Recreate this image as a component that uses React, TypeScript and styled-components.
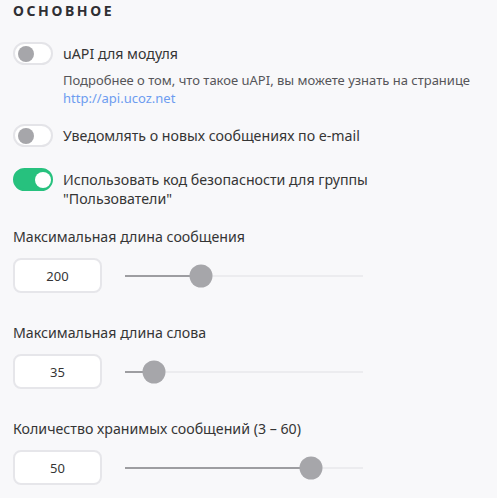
import React from 'react';
import styled, { createGlobalStyle } from 'styled-components';

const GlobalStyle = createGlobalStyle`
  html, body {
    margin: 0;
    padding: 0;
    background: #f8f8fa;
  }
  body {
    font-family: 'Noto Sans', 'Open Sans', sans-serif;
    color: #353535;
  }
`;

const Page = styled.div`
  width: 497px;
  height: 498px;
  box-sizing: border-box;
  padding: 1px 13px 0;
  background: #f8f8fa;
  overflow: hidden;
`;

const Title = styled.h2`
  margin: 0;
  font-size: 14px;
  font-weight: 700;
  letter-spacing: 2.6px;
  line-height: 20px;
  color: #2f2f33;
`;

const OptionList = styled.div`
  display: flex;
  flex-direction: column;
  margin-top: 21px;
  gap: 21px;
`;

const OptionRow = styled.div`
  display: flex;
  align-items: flex-start;
  gap: 10px;
`;

const Toggle = styled.div<{ $on?: boolean }>`
  flex: none;
  position: relative;
  width: 40px;
  height: 23px;
  box-sizing: border-box;
  border-radius: 12px;
  border: 2px solid ${(p) => (p.$on ? '#27c17e' : '#e4e4e8')};
  background: ${(p) => (p.$on ? '#27c17e' : '#ffffff')};

  &::after {
    content: '';
    position: absolute;
    top: 1.5px;
    left: ${(p) => (p.$on ? '19.5px' : '2.5px')};
    width: 16px;
    height: 16px;
    border-radius: 50%;
    background: ${(p) => (p.$on ? '#ffffff' : '#a6a6aa')};
  }
`;

const OptionText = styled.div`
  padding-top: 2px;
`;

const OptionLabel = styled.div`
  font-size: 14.2px;
  line-height: 19px;
  color: #353535;
`;

const Hint = styled.div`
  margin: 8px 0 -4px;
  font-size: 13px;
  line-height: 18px;
  color: #555559;
`;

const HintLink = styled.a`
  color: #6d9cf0;
  text-decoration: none;
`;

const SliderList = styled.div`
  display: flex;
  flex-direction: column;
  gap: 30px;
  margin-top: 19px;
`;

const SliderField = styled.div`
  display: flex;
  flex-direction: column;
  gap: 11px;
`;

const FieldLabel = styled.div`
  font-size: 14.2px;
  line-height: 20px;
  color: #353535;
`;

const Controls = styled.div`
  display: flex;
  align-items: center;
  gap: 23px;
`;

const NumberBox = styled.div`
  width: 89px;
  height: 35px;
  box-sizing: border-box;
  border: 2px solid #e6e6ea;
  border-radius: 8px;
  background: #ffffff;
  display: flex;
  align-items: center;
  justify-content: center;
  font-size: 13px;
  color: #353535;
`;

const Track = styled.div`
  position: relative;
  width: 238px;
  height: 2px;
  background: #ececef;
`;

const Fill = styled.div`
  height: 100%;
  background: #9d9da1;
`;

const Thumb = styled.div`
  position: absolute;
  top: 50%;
  width: 23px;
  height: 23px;
  border-radius: 50%;
  background: #a6a6aa;
  transform: translate(-50%, -50%);
`;

type SliderProps = { label: string; value: number; pos: number };

const Slider: React.FC<SliderProps> = ({ label, value, pos }) => (
  <SliderField>
    <FieldLabel>{label}</FieldLabel>
    <Controls>
      <NumberBox>{value}</NumberBox>
      <Track>
        <Fill style={{ width: `${pos}%` }} />
        <Thumb style={{ left: `${pos}%` }} />
      </Track>
    </Controls>
  </SliderField>
);

export default function App() {
  return (
    <Page>
      <GlobalStyle />
      <Title>ОСНОВНОЕ</Title>
      <OptionList>
        <OptionRow>
          <Toggle />
          <OptionText>
            <OptionLabel>uAPI для модуля</OptionLabel>
            <Hint>
              Подробнее о том, что такое uAPI, вы можете узнать на странице
              <br />
              <HintLink href="#">http://api.ucoz.net</HintLink>
            </Hint>
          </OptionText>
        </OptionRow>
        <OptionRow>
          <Toggle />
          <OptionText>
            <OptionLabel>Уведомлять о новых сообщениях по e-mail</OptionLabel>
          </OptionText>
        </OptionRow>
        <OptionRow>
          <Toggle $on />
          <OptionText>
            <OptionLabel>
              Использовать код безопасности для группы
              <br />
              "Пользователи"
            </OptionLabel>
          </OptionText>
        </OptionRow>
      </OptionList>
      <SliderList>
        <Slider label="Максимальная длина сообщения" value={200} pos={31.8} />
        <Slider label="Максимальная длина слова" value={35} pos={12.2} />
        <Slider label="Количество хранимых сообщений (3 – 60)" value={50} pos={78.2} />
      </SliderList>
    </Page>
  );
}
